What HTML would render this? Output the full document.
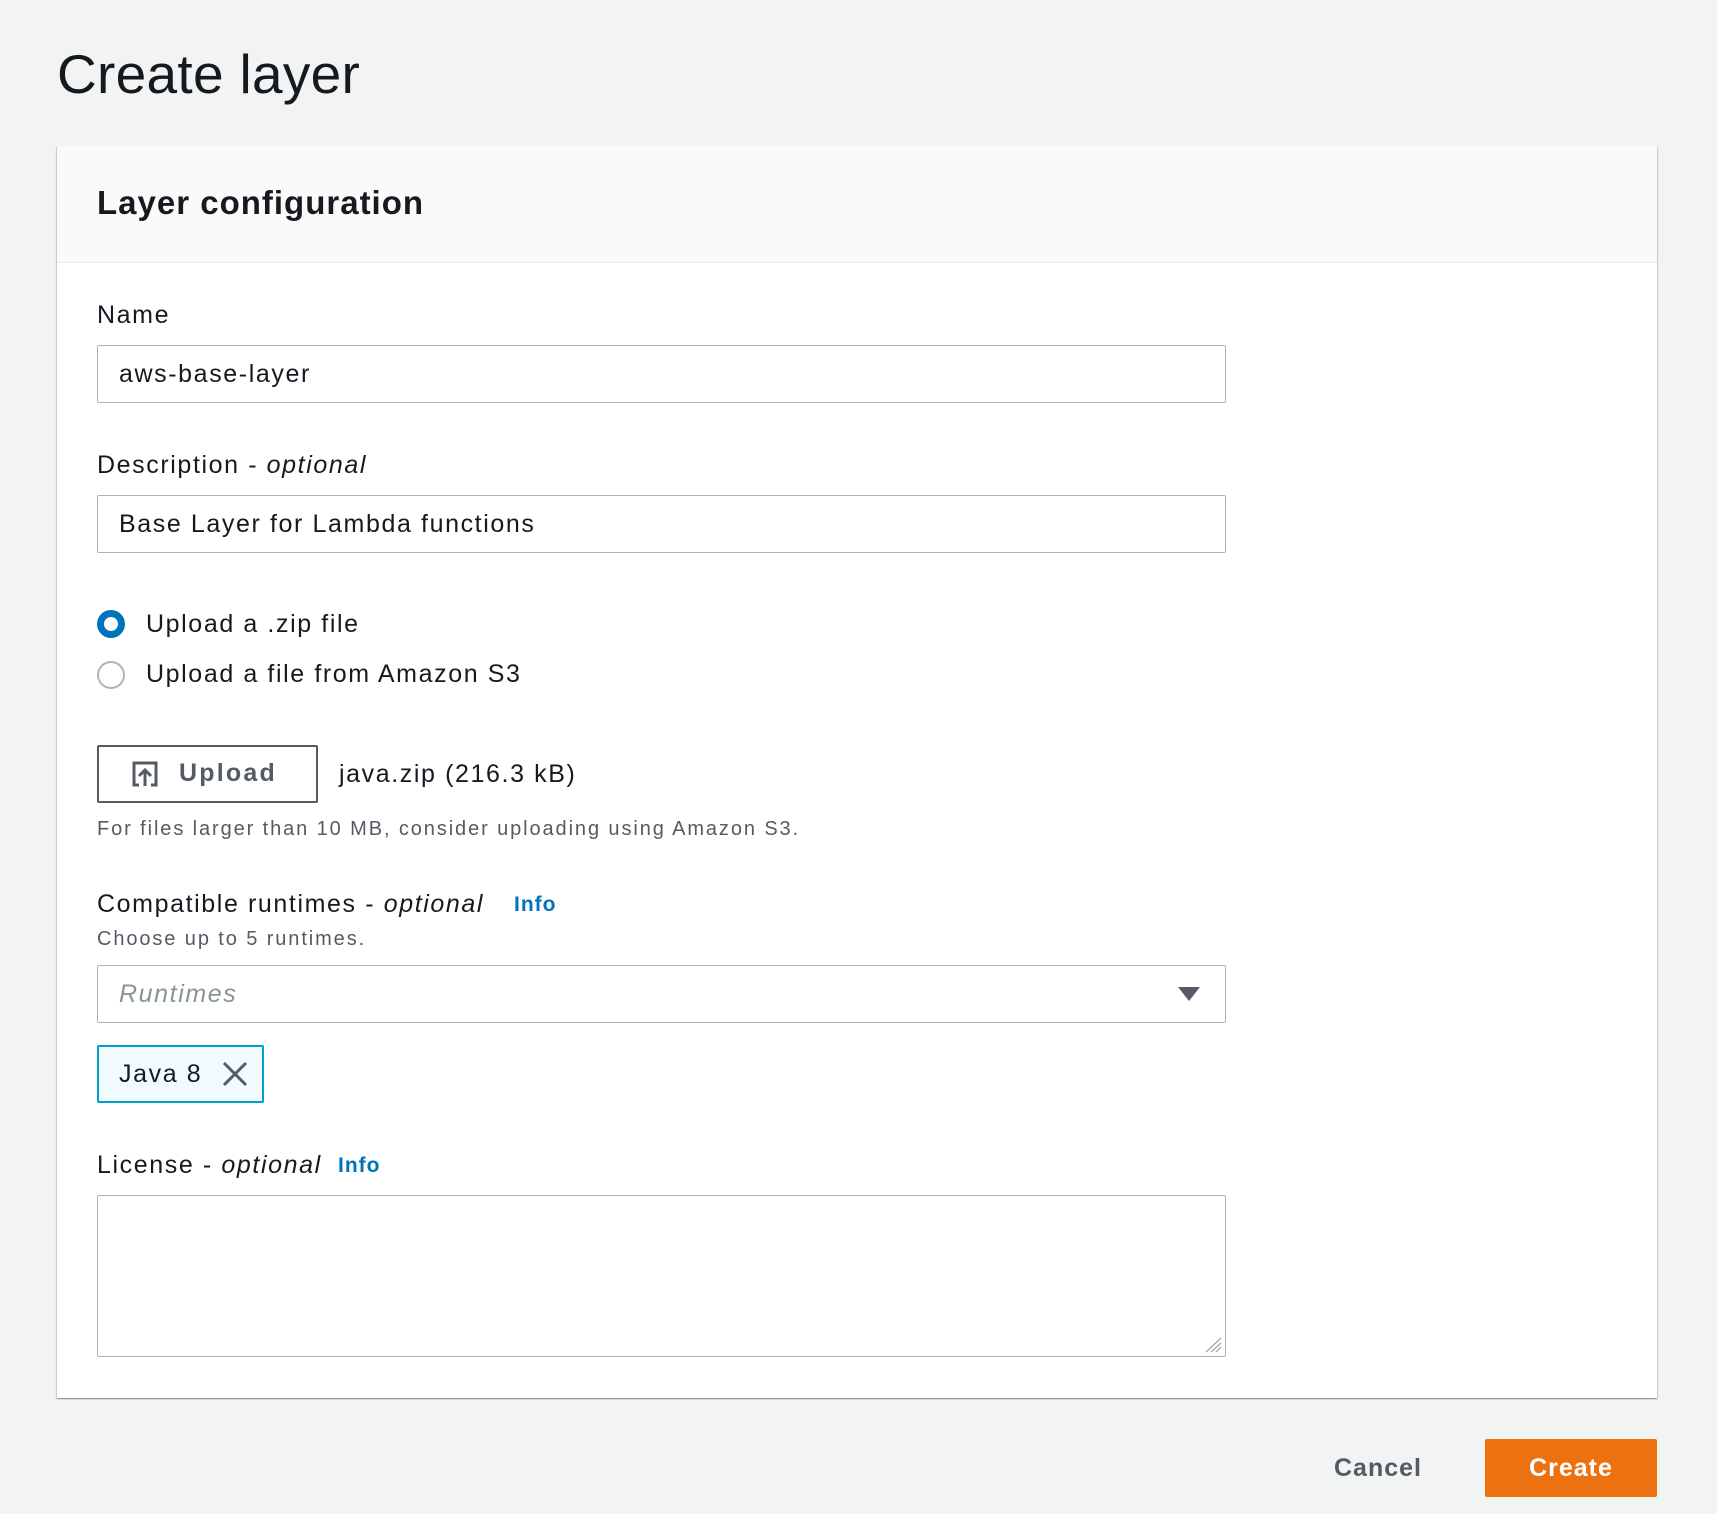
<!DOCTYPE html>
<html><head><meta charset="utf-8"><style>
*{box-sizing:border-box;margin:0;padding:0}
body{width:1717px;height:1514px;background:#f2f3f3;font-family:"Liberation Sans",sans-serif;color:#16191f;position:relative;overflow:hidden}
.a{position:absolute;white-space:nowrap}
h1{position:absolute;left:57px;top:42px;font-size:55px;font-weight:400;letter-spacing:0.3px}
.panel{position:absolute;left:57px;top:146px;width:1600px;height:1252px;background:#fff;box-shadow:0 1px 1px 0 rgba(0,28,36,.3),1px 1px 1px 0 rgba(0,28,36,.15),-1px 1px 1px 0 rgba(0,28,36,.15)}
.hdr{position:absolute;left:0;top:0;width:100%;height:117px;background:#fafafa;border-bottom:1px solid #eaeded}
.lbl{font-size:25px;letter-spacing:1.6px}
.inp{position:absolute;left:97px;width:1129px;border:1px solid #aab7b8;border-radius:2px;background:#fff;font-size:25px;letter-spacing:1.6px;padding-left:21px;display:flex;align-items:center}
.info{color:#0073bb;font-weight:700;font-size:21px;letter-spacing:1px}
.hint{font-size:20px;color:#545b64;letter-spacing:1.9px}
</style></head><body>
<h1>Create layer</h1>
<div class="panel"><div class="hdr"></div></div>
<div class="a" style="left:97px;top:184px;font-size:33px;font-weight:700;letter-spacing:1px">Layer configuration</div>
<div class="a lbl" style="left:97px;top:301px">Name</div>
<div class="inp" style="top:345px;height:58px">aws-base-layer</div>
<div class="a lbl" style="left:97px;top:451px">Description - <i>optional</i></div>
<div class="inp" style="top:495px;height:58px">Base Layer for Lambda functions</div>
<div class="a" style="left:97px;top:610px;width:28px;height:28px;border-radius:50%;border:7px solid #0073bb;background:#fff"></div>
<div class="a lbl" style="left:146px;top:610px">Upload a .zip file</div>
<div class="a" style="left:97px;top:661px;width:28px;height:28px;border-radius:50%;border:2px solid #aab7b8;background:#fff"></div>
<div class="a lbl" style="left:146px;top:660px">Upload a file from Amazon S3</div>
<div class="a" style="left:97px;top:745px;width:221px;height:58px;border:2px solid #545b64;border-radius:2px;background:#fff"></div>
<svg class="a" style="left:131px;top:760px" width="28" height="28" viewBox="0 0 28 28"><path d="M8 25H3V3h22v22h-5" fill="none" stroke="#545b64" stroke-width="3"/><path d="M14 26V10M8 16l6-6 6 6" fill="none" stroke="#545b64" stroke-width="3"/></svg>
<div class="a" style="left:179px;top:759px;font-size:25px;font-weight:700;color:#545b64;letter-spacing:2.2px">Upload</div>
<div class="a lbl" style="left:339px;top:760px">java.zip (216.3 kB)</div>
<div class="a hint" style="left:97px;top:818px">For files larger than 10 MB, consider uploading using Amazon S3.</div>
<div class="a lbl" style="left:97px;top:890px">Compatible runtimes - <i>optional</i></div>
<div class="a info" style="left:514px;top:893px">Info</div>
<div class="a hint" style="left:97px;top:928px">Choose up to 5 runtimes.</div>
<div class="inp" style="top:965px;height:58px;color:#879596;font-style:italic">Runtimes</div>
<svg class="a" style="left:1177px;top:985px" width="24" height="18"><path d="M1 2h22L12 16z" fill="#545b64"/></svg>
<div class="a" style="left:97px;top:1045px;width:167px;height:58px;border:2px solid #00a1c9;border-radius:2px;background:#f1faff"></div>
<div class="a lbl" style="left:119px;top:1060px">Java 8</div>
<svg class="a" style="left:222px;top:1061px" width="26" height="26"><path d="M2 2l22 22M24 2L2 24" stroke="#545b64" stroke-width="3"/></svg>
<div class="a lbl" style="left:97px;top:1151px">License - <i>optional</i></div>
<div class="a info" style="left:338px;top:1154px">Info</div>
<div class="inp" style="top:1195px;height:162px"></div>
<svg class="a" style="left:1204px;top:1337px" width="18" height="16"><path d="M2 15L17 1M7 15L17 6M12 15l5-5" stroke="#879596" stroke-width="1"/></svg>
<div class="a" style="left:1334px;top:1454px;font-size:25px;font-weight:700;color:#545b64;letter-spacing:1px">Cancel</div>
<div class="a" style="left:1485px;top:1439px;width:172px;height:58px;background:#ec7211;border-radius:2px;color:#fff;font-size:25px;font-weight:700;letter-spacing:1px;display:flex;align-items:center;justify-content:center">Create</div>
</body></html>
